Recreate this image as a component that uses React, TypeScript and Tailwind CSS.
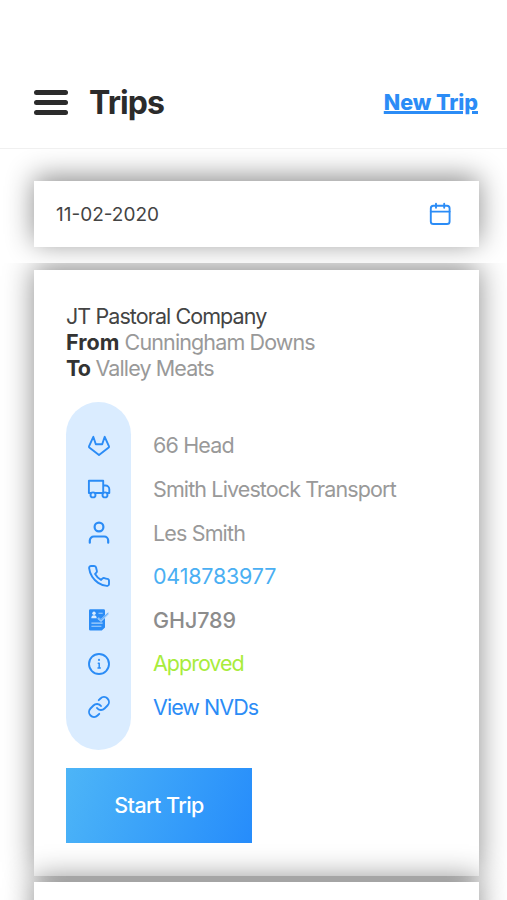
import type { ReactNode } from "react";
import clsx from "clsx";

const CARD = "bg-white shadow-[0_-4px_28px_rgba(0,0,0,0.46)]";

function Stroke({ children, width = 1.9 }: { children: ReactNode; width?: number }) {
  return (
    <svg
      viewBox="0 0 24 24"
      className="size-6"
      fill="none"
      stroke="currentColor"
      strokeWidth={width}
      strokeLinecap="round"
      strokeLinejoin="round"
    >
      {children}
    </svg>
  );
}

const HeadIcon = () => (
  <Stroke>
    <path d="M6.3 2.8 2 12.4a1 1 0 0 0 .3 1.1L12 21l9.7-7.5a1 1 0 0 0 .3-1.1L17.7 2.8 15.2 10.3H8.8Z" />
  </Stroke>
);

const TruckIcon = () => (
  <Stroke>
    <path d="M3.6 16H1.9V3.8h14.3V16H8.6M16.2 8.5h2.3a3.8 3.8 0 0 1 3.8 3.8V16h-2" />
    <circle cx="6" cy="17.9" r="2.5" />
    <circle cx="18" cy="17.9" r="2.5" />
  </Stroke>
);

const UserIcon = () => (
  <Stroke width={2.2}>
    <circle cx="12" cy="6" r="4.4" />
    <path d="M2.8 21.7v-2.2a4 4 0 0 1 4-4h10.4a4 4 0 0 1 4 4v2.2" />
  </Stroke>
);

const PhoneIcon = () => (
  <Stroke>
    <path d="M22 16.92v3a2 2 0 0 1-2.18 2 19.79 19.79 0 0 1-8.63-3.07 19.5 19.5 0 0 1-6-6 19.79 19.79 0 0 1-3.07-8.67A2 2 0 0 1 4.11 2h3a2 2 0 0 1 2 1.72c.127.96.361 1.903.7 2.81a2 2 0 0 1-.45 2.11L8.09 9.91a16 16 0 0 0 6 6l1.27-1.27a2 2 0 0 1 2.11-.45c.907.339 1.85.573 2.81.7A2 2 0 0 1 22 16.92z" />
  </Stroke>
);

const LicenceIcon = () => (
  <svg viewBox="0 0 24 24" className="size-6" fill="none">
    <path d="M3.4 1.2h13.2q1.4 0 1.4 1.4v16.8l-3.2 3.2H3.4Q2 22.6 2 21.2V2.6q0-1.4 1.4-1.4Z" fill="#2b8cf6" />
    <circle cx="7" cy="5.3" r="1.7" fill="#daecff" />
    <path d="M4.3 10.2q0-3 2.7-3t2.7 3Z" fill="#daecff" />
    <path d="M11.5 5.2h4.2M4.4 15.1h11.2M4.4 18.3h10" stroke="#a9d2fd" strokeWidth="1.1" />
    <path d="m11 10 3 2.6 7.3-7.4" stroke="#a9d2fd" strokeWidth="2.2" />
    <path d="m11.4 10 2.6 2.2 7.3-7.2" stroke="#5ba9f9" strokeWidth="1" />
  </svg>
);

const InfoIcon = () => (
  <Stroke>
    <circle cx="12" cy="12" r="10" />
    <path d="M11.3 11.2h.9v4.6M11 16h2.3" strokeWidth={1.5} />
    <circle cx="12" cy="7.9" r=".4" strokeWidth={1.4} />
  </Stroke>
);

const LinkIcon = () => (
  <Stroke>
    <path d="M10 13a5 5 0 0 0 7.54.54l3-3a5 5 0 0 0-7.07-7.07l-1.72 1.71" />
    <path d="M14 11a5 5 0 0 0-7.54-.54l-3 3a5 5 0 0 0 7.07 7.07l1.71-1.71" />
  </Stroke>
);

const CalendarIcon = () => (
  <Stroke width={1.9}>
    <rect x="2.8" y="3.8" width="18.8" height="18.2" rx="2.6" />
    <path d="M2.8 9.6h18.8M8 1.8v4M16.2 1.8v4" />
  </Stroke>
);

const details = [
  { icon: <HeadIcon />, text: "66 Head", className: "text-[#999] tracking-[-0.85px]" },
  { icon: <TruckIcon />, text: "Smith Livestock Transport", className: "text-[#999] tracking-[-0.88px]" },
  { icon: <UserIcon />, text: "Les Smith", className: "text-[#999] tracking-[-0.85px]" },
  { icon: <PhoneIcon />, text: "0418783977", className: "text-[#4aaff3] tracking-[-0.2px]" },
  { icon: <LicenceIcon />, text: "GHJ789", className: "font-medium text-[#8c8c8c] tracking-[-0.1px]" },
  { icon: <InfoIcon />, text: "Approved", className: "text-[#a8ec3c] tracking-[-1px]" },
  { icon: <LinkIcon />, text: "View NVDs", className: "text-[#2b8cf6] tracking-[-0.95px]" },
];

function Header() {
  return (
    <header className="flex h-[149px] shrink-0 items-end justify-between border-b border-[#f0f0f0] pr-[29px] pb-[27px] pl-[34px]">
      <div className="flex items-center gap-[21px]">
        <button aria-label="Menu" className="flex w-[34px] flex-col gap-[5px]">
          <span className="h-[5px] rounded-full bg-[#2b2b2b]" />
          <span className="h-[5px] rounded-full bg-[#2b2b2b]" />
          <span className="h-[5px] rounded-full bg-[#2b2b2b]" />
        </button>
        <h1 className="pt-px text-[32px] leading-[37px] font-bold tracking-[-0.9px] text-[#2b2b2b]">Trips</h1>
      </div>
      <a
        href="#"
        className="text-[21.5px] leading-[38px] font-extrabold tracking-[-0.05px] text-[#2b8cf6] underline decoration-[3px] underline-offset-[0.5px]"
      >
        New Trip
      </a>
    </header>
  );
}

function TripCard() {
  return (
    <article className={clsx(CARD, "h-[606px] shrink-0 px-8 pt-[33px]")}>
      <div className="text-[21.5px] leading-[26px] tracking-[-0.88px] text-[#999]">
        <h2 className="tracking-[-0.92px] text-[#444]">JT Pastoral Company</h2>
        <p>
          <b className="tracking-[0.05px] text-[#333]">From</b> Cunningham Downs
        </p>
        <p>
          <b className="tracking-[-0.8px] text-[#333]">To</b> Valley Meats
        </p>
      </div>

      <div className="mt-[21px] flex h-[348px] gap-[22px]">
        <div className="flex w-[65px] flex-col items-center rounded-full bg-[#daecff] pt-[21.8px] text-[#2b8cf6]">
          {details.map((d) => (
            <span key={d.text} className="flex h-[43.6px] shrink-0 items-center">{d.icon}</span>
          ))}
        </div>
        <ul className="pt-[21.8px] text-[21.5px]">
          {details.map((d) => (
            <li key={d.text} className={clsx("flex h-[43.6px] items-center whitespace-nowrap", d.className)}>
              {d.text}
            </li>
          ))}
        </ul>
      </div>

      <button className="mt-[18px] h-[75px] w-[186px] bg-linear-110 from-[#4db5f7] to-[#268cfb] text-[21.5px] font-medium tracking-[-0.6px] text-white">
        Start Trip
      </button>
    </article>
  );
}

export default function App() {
  return (
    <div className="flex h-[900px] w-[507px] flex-col overflow-hidden bg-white font-['Inter',sans-serif]">
      <Header />
      <div className="h-[114px] shrink-0 overflow-hidden pt-8 pr-7 pl-[34px]">
        <div className={clsx(CARD, "flex h-[66px] items-center justify-between pr-[27px] pl-[22px]")}>
          <span className="pt-0.5 text-[19px] text-[#444]">11-02-2020</span>
          <span className="text-[#2b8cf6]">
            <CalendarIcon />
          </span>
        </div>
      </div>

      {/* Trip list, clips the card shadows at its top edge */}
      <main className="flex flex-1 flex-col gap-[6px] overflow-hidden pt-[7px] pr-7 pl-[34px]">
        <TripCard />
        <article className={clsx(CARD, "h-[606px] shrink-0")} />
      </main>
    </div>
  );
}
